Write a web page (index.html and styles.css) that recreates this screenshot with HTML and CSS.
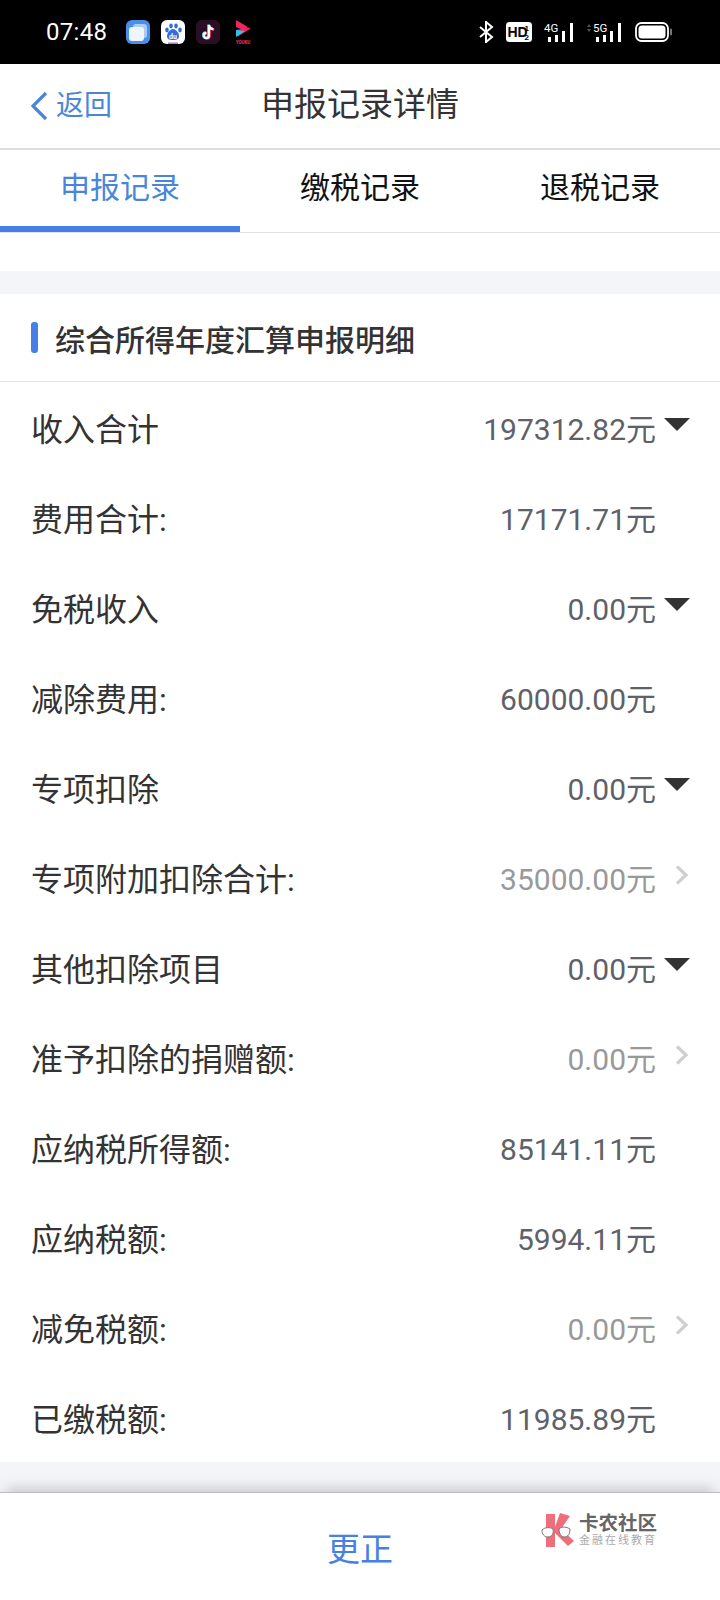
FILE: index.html
```html
<!DOCTYPE html>
<html lang="zh-CN">
<head>
<meta charset="utf-8">
<title>申报记录详情</title>
<link rel="stylesheet" href="styles.css">
</head>
<body>
<div class="page">
  <header class="status">
    <span class="time">07:48</span>
    <div class="apps">
      <svg class="app" viewBox="0 0 24 24"><rect width="24" height="24" rx="6" fill="#4a8fe8"/><rect x="7" y="4" width="14" height="14" rx="3" fill="#a9cdf6"/><rect x="3" y="7" width="15" height="14" rx="3" fill="#eef5fd"/></svg>
      <svg class="app" viewBox="0 0 24 24"><rect width="24" height="24" rx="6" fill="#fff"/><g fill="#2f6fd6"><ellipse cx="6" cy="10" rx="1.8" ry="2.4"/><ellipse cx="10" cy="6" rx="1.8" ry="2.4"/><ellipse cx="15" cy="6" rx="1.8" ry="2.4"/><ellipse cx="19" cy="10" rx="1.8" ry="2.4"/><path d="M12 9c3 0 6 4 6 7s-2 4-6 4-6-1-6-4 3-7 6-7z"/></g><text x="12" y="18.5" class="du">du</text><rect x="7" y="22.5" width="10" height="1.5" fill="#b07ad0"/></svg>
      <svg class="app" viewBox="0 0 24 24"><rect width="24" height="24" rx="6" fill="#2a0f24"/><path d="M13 5v10.5a2.6 2.6 0 1 1-2.6-2.6M13 5c.3 2.5 2 4 4.5 4.2" fill="none" stroke="#25f4ee" stroke-width="2.2" transform="translate(-.7 -.5)"/><path d="M13 5v10.5a2.6 2.6 0 1 1-2.6-2.6M13 5c.3 2.5 2 4 4.5 4.2" fill="none" stroke="#fe2c55" stroke-width="2.2" transform="translate(.7 .5)"/><path d="M13 5v10.5a2.6 2.6 0 1 1-2.6-2.6M13 5c.3 2.5 2 4 4.5 4.2" fill="none" stroke="#fff" stroke-width="2.2"/></svg>
      <svg class="app" viewBox="0 0 24 24"><path d="M5 0l12 7-5 3-7-3z" fill="#f0245f"/><path d="M18 7.5l1.5 1L7 16.500 5 14l0-4z" fill="#f0245f"/><path d="M5 10l9 1-9 6z" fill="#22c8ee"/><text x="12" y="23.500" class="yk">YOUKU</text></svg>
    </div>
    <div class="indicators">
      <svg class="bt" viewBox="0 0 16 22"><path d="M2 6l12 10-6 5V1l6 5L2 16" fill="none" stroke="#fff" stroke-width="2"/></svg>
      <svg class="hd" viewBox="0 0 26 20"><rect width="26" height="20" rx="3.500" fill="#fff"/><text x="1.500" y="15" class="hd-t">HD</text><text x="18.500" y="9" class="hd-n">1</text><text x="18.500" y="18" class="hd-n">2</text></svg>
      <svg class="sig" viewBox="0 0 31 20"><text x="0" y="10" class="net">4G</text><g fill="#fff"><rect x="4" y="15" width="3" height="5"/><rect x="11" y="13" width="3" height="7"/><rect x="18" y="9" width="3" height="11"/><rect x="26" y="1" width="3" height="19"/></g></svg>
      <svg class="sig5" viewBox="0 0 39 20"><path d="M3 5l2-3 2 3zM3 7l2 3 2-3z" fill="#555"/><text x="9" y="10" class="net">5G</text><g fill="#fff"><rect x="12" y="15" width="3" height="5"/><rect x="19" y="13" width="3" height="7"/><rect x="26" y="9" width="3" height="11"/><rect x="34" y="1" width="3" height="19"/></g></svg>
      <svg class="bat" viewBox="0 0 38 20"><rect x="1" y="1" width="32" height="18" rx="5.500" fill="none" stroke="#fff" stroke-width="1.800"/><rect x="3.500" y="3.500" width="27" height="13" rx="3.500" fill="#fff"/><rect x="35" y="6.500" width="2" height="7" rx="1" fill="#777"/></svg>
    </div>
  </header>

  <nav class="nav">
    <div class="back">
      <svg class="back-ic" viewBox="0 0 18 30"><path d="M16 2L3 15l13 13" fill="none" stroke="#4a86d8" stroke-width="3.200"/></svg>
      <span>返回</span>
    </div>
    <h1 class="nav-title">申报记录详情</h1>
  </nav>

  <div class="tabs">
    <div class="tab active">申报记录</div>
    <div class="tab">缴税记录</div>
    <div class="tab">退税记录</div>
  </div>

  <div class="clipped"><span>公司</span></div>

  <main class="content">
    <section class="card">
      <h2 class="sec-title"><i class="mark"></i>综合所得年度汇算申报明细</h2>
      <div class="row"><span class="label">收入合计</span><span class="val">197312.82元</span><i class="end"><b class="tri"></b></i></div>
      <div class="row"><span class="label">费用合计:</span><span class="val">17171.71元</span><i class="end"></i></div>
      <div class="row"><span class="label">免税收入</span><span class="val">0.00元</span><i class="end"><b class="tri"></b></i></div>
      <div class="row"><span class="label">减除费用:</span><span class="val">60000.00元</span><i class="end"></i></div>
      <div class="row"><span class="label">专项扣除</span><span class="val">0.00元</span><i class="end"><b class="tri"></b></i></div>
      <div class="row"><span class="label">专项附加扣除合计:</span><span class="val link">35000.00元</span><i class="end"><svg class="chev" viewBox="0 0 14 20"><path d="M2 1.500L11 10l-9 8.500" fill="none" stroke="#cfcfd2" stroke-width="3.200"/></svg></i></div>
      <div class="row"><span class="label">其他扣除项目</span><span class="val">0.00元</span><i class="end"><b class="tri"></b></i></div>
      <div class="row"><span class="label">准予扣除的捐赠额:</span><span class="val link">0.00元</span><i class="end"><svg class="chev" viewBox="0 0 14 20"><path d="M2 1.500L11 10l-9 8.500" fill="none" stroke="#cfcfd2" stroke-width="3.200"/></svg></i></div>
      <div class="row"><span class="label">应纳税所得额:</span><span class="val">85141.11元</span><i class="end"></i></div>
      <div class="row"><span class="label">应纳税额:</span><span class="val">5994.11元</span><i class="end"></i></div>
      <div class="row"><span class="label">减免税额:</span><span class="val link">0.00元</span><i class="end"><svg class="chev" viewBox="0 0 14 20"><path d="M2 1.500L11 10l-9 8.500" fill="none" stroke="#cfcfd2" stroke-width="3.200"/></svg></i></div>
      <div class="row"><span class="label">已缴税额:</span><span class="val">11985.89元</span><i class="end"></i></div>
    </section>
  </main>

  <footer class="footer">
    <span class="fix">更正</span>
    <div class="logo">
      <svg class="logo-ic" viewBox="0 0 36 34"><path d="M5 1h9v13l5-14 10 3-9 13 13 12-6 5-13-13v14H5z" fill="#ee6f7b"/><path d="M1 17c3-3 8-3 11-1 1 4-1 8-5 8s-6-3-6-7zM18 16c3-3 8-2 11 0 0 5-2 8-6 8-3 0-5-4-5-8z" fill="#fff" stroke="#777" stroke-width="1"/></svg>
      <div class="logo-t">
        <span class="logo-a">卡农社区</span>
        <span class="logo-b">金融在线教育</span>
      </div>
    </div>
  </footer>
</div>
</body>
</html>
```
FILE: styles.css
```css
* { box-sizing: border-box; }
html, body { margin: 0; padding: 0; background: #fff; }
body { font-family: Roboto, "Noto Sans CJK SC", sans-serif; }
.page { width: 720px; height: 1600px; display: flex; flex-direction: column; overflow: hidden; background: #fff; }

.status { height: 64px; flex: none; background: #000; display: flex; align-items: center; padding: 0 47px 0 46px; color: #fff; }
.time { font-size: 24px; width: 80px; letter-spacing: .3px; }
.apps { display: flex; gap: 11px; }
.app { width: 24px; height: 24px; display: block; }
.du { font: 700 7px Roboto, sans-serif; fill: #fff; text-anchor: middle; }
.yk { font: 700 4.500px Roboto, sans-serif; fill: #e8386a; text-anchor: middle; }
.indicators { margin-left: auto; display: flex; align-items: center; }
.indicators svg { display: block; height: 20px; }
.bt { width: 16px; height: 22px !important; margin-right: 12px; }
.hd { width: 26px; margin-right: 12px; }
.sig { width: 31px; margin-right: 9px; }
.sig5 { width: 39px; margin-right: 12px; }
.bat { width: 38px; }
.hd-t { font: 800 14px "Liberation Sans", sans-serif; fill: #000; }
.hd-n { font: 700 8px "Liberation Sans", sans-serif; fill: #000; }
.net { font: 400 11.500px Roboto, sans-serif; fill: #fff; }

.nav { height: 86px; flex: none; position: relative; display: flex; align-items: center; justify-content: center; border-bottom: 2px solid #dcdcdc; }
.back { position: absolute; left: 30px; top: 26px; display: flex; align-items: center; gap: 8px; color: #4a86d8; font-size: 28px; line-height: 32px; }
.back-ic { width: 18px; height: 30px; display: block; }
.nav-title { margin: 0 0 2px; font-size: 33px; font-weight: 400; color: #333; line-height: 44px; }

.tabs { height: 83px; flex: none; display: flex; border-bottom: 1px solid #e2e2e2; }
.tab { flex: 1; display: flex; align-items: center; justify-content: center; height: 82px; padding-bottom: 7px; font-size: 30px; color: #111; border-bottom: 6px solid transparent; margin-bottom: -1px; height: 82px; }
.tab.active { color: #4a86d8; border-bottom-color: #4680e6; }

.clipped { height: 38px; flex: none; overflow: hidden; display: flex; justify-content: flex-end; padding-right: 33px; }
.clipped span { font-size: 27px; line-height: 36px; margin-top: -30px; color: #333; }

.content { flex: 1; background: #f4f5f8; padding-top: 23px; }
.card { background: #fff; }
.sec-title { margin: 0; height: 88px; display: flex; align-items: center; padding-left: 31px; font-size: 30px; font-weight: 500; color: #333; border-bottom: 1px solid #e4e4e4; }
.mark { width: 7px; height: 31px; border-radius: 3px; background: #4680e6; margin-right: 17px; }
.row { height: 90px; display: flex; align-items: center; padding: 0 31px; }
.label { flex: 1; font-size: 32px; color: #333; }
.val { font-size: 30px; color: #5f6168; }
.val.link { color: #999; }
.end { width: 33px; flex: none; display: flex; justify-content: flex-end; align-items: center; }
.tri { width: 0; height: 0; border-left: 13px solid transparent; border-right: 13px solid transparent; border-top: 13px solid #333; margin-right: -1px; margin-top: -5px; }
.chev { width: 14px; height: 20px; display: block; margin-right: 0; margin-top: -4px; }

.footer { height: 108px; flex: none; position: relative; background: #fff; border-top: 1px solid #bdbdc0; box-shadow: 0 -10px 12px -6px rgba(120,120,130,.35); display: flex; align-items: center; justify-content: center; }
.fix { font-size: 33px; color: #4680e6; }
.logo { position: absolute; left: 541px; top: 20px; display: flex; align-items: center; gap: 2px; }
.logo-ic { width: 36px; height: 34px; display: block; }
.logo-t { display: flex; flex-direction: column; line-height: 1; }
.logo-a { font-size: 19.500px; font-weight: 700; color: #666; white-space: nowrap; }
.logo-b { font-size: 11px; color: #aaa; letter-spacing: 2px; white-space: nowrap; margin-top: 2px; }
```
